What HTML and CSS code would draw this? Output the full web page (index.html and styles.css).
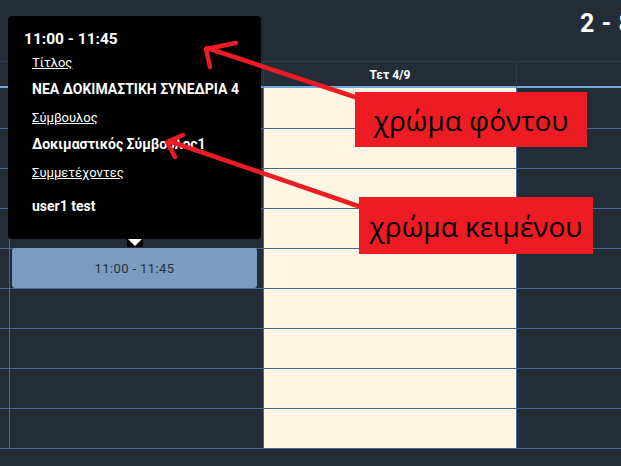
FILE: index.html
```html
<!DOCTYPE html>
<html lang="el">
<head>
<meta charset="utf-8">
<title>Calendar</title>
<link rel="stylesheet" href="styles.css">
</head>
<body>
<div class="page">
  <header class="topbar">
    <h1 class="range">2 - 8 Σεπτεμβρίου 2024</h1>
  </header>
  <div class="cal">
    <div class="hcell hgutter"></div>
    <div class="hcell hday"></div>
    <div class="hcell hday">Τετ 4/9</div>
    <div class="hcell hday hnext">Πεμ 5/9</div>

    <div class="col gutter">
      <div class="cell"></div><div class="cell"></div><div class="cell"></div><div class="cell"></div><div class="cell"></div><div class="cell"></div><div class="cell"></div><div class="cell"></div><div class="cell"></div>
    </div>
    <div class="col day">
      <div class="cell"></div><div class="cell"></div><div class="cell"></div><div class="cell"></div><div class="cell"></div><div class="cell"></div><div class="cell"></div><div class="cell"></div><div class="cell"></div>
      <div class="event" style="top:160px;height:40px">11:00 - 11:45</div>
    </div>
    <div class="col day today">
      <div class="cell"></div><div class="cell"></div><div class="cell"></div><div class="cell"></div><div class="cell"></div><div class="cell"></div><div class="cell"></div><div class="cell"></div><div class="cell"></div>
    </div>
    <div class="col day">
      <div class="cell"></div><div class="cell"></div><div class="cell"></div><div class="cell"></div><div class="cell"></div><div class="cell"></div><div class="cell"></div><div class="cell"></div><div class="cell"></div>
    </div>
  </div>

  <div class="tooltip">
    <div class="tt-time">11:00 - 11:45</div>
    <div class="tt-label">Τίτλος</div>
    <div class="tt-value">ΝΕΑ ΔΟΚΙΜΑΣΤΙΚΗ ΣΥΝΕΔΡΙΑ 4</div>
    <div class="tt-label">Σύμβουλος</div>
    <div class="tt-value">Δοκιμαστικός Σύμβουλος1</div>
    <div class="tt-label">Συμμετέχοντες</div>
    <div class="tt-value tt-last">user1 test</div>
  </div>
  <div class="tt-arrow"></div>

  <svg class="arrows" width="621" height="466" viewBox="0 0 621 466">
    <g stroke="#ed1c24" stroke-width="4.5" stroke-linecap="round" stroke-linejoin="round" fill="none">
      <path d="M358 98 L207 48"/>
      <path d="M236 43 L206 49 L210 67"/>
      <path d="M361 207 L169 141"/>
      <path d="M183 135 L167 142 L175 157"/>
    </g>
  </svg>

  <div class="note note-bg">χρώμα φόντου</div>
  <div class="note note-fg">χρώμα κειμένου</div>
</div>
</body>
</html>
```

FILE: styles.css
```css
* { box-sizing: border-box; }
html, body {
  margin: 0;
  padding: 0;
  width: 621px;
  height: 466px;
  overflow: hidden;
  background: #222d38;
}
.page {
  position: relative;
  width: 621px;
  height: 466px;
  overflow: hidden;
  font-family: Roboto, "DejaVu Sans", sans-serif;
  color: #fff;
}
.topbar {
  height: 61px;
  padding-left: 580px;
  white-space: nowrap;
  overflow: hidden;
}
.range {
  margin: 0;
  padding-top: 10px;
  font-size: 25px;
  line-height: 28px;
  font-weight: 700;
  letter-spacing: 0.5px;
}
.cal {
  display: grid;
  grid-template-columns: 9px 254px 253px 254px;
  grid-template-rows: 27px auto;
  width: 770px;
}
.hcell {
  border-top: 1px solid #303c49;
  border-bottom: 2px solid #6fa8e0;
  height: 27px;
  font-size: 12px;
  font-weight: 700;
  text-align: center;
  line-height: 24px;
  padding-top: 1px;
  white-space: nowrap;
}
.hday { border-left: 1px solid #303c49; }
.col {
  position: relative;
  padding-top: 1px;
}
.day { border-left: 1px solid #4a679a; }
.today { background: #fdf6e3; }
.cell {
  height: 40px;
  border-bottom: 1px solid #4a679a;
}
.event {
  position: absolute;
  left: 2px;
  right: 6px;
  background: #7a9cc0;
  border-radius: 3px;
  color: #26313c;
  font-size: 13px;
  display: flex;
  align-items: center;
  justify-content: center;
  letter-spacing: 0.4px;
}
.tooltip {
  position: absolute;
  left: 8px;
  top: 16px;
  width: 253px;
  height: 223px;
  background: #000;
  border-radius: 4px;
  padding: 13px 16px 0 16px;
}
.tt-time {
  font-size: 15.5px;
  font-weight: 700;
  line-height: 20px;
  margin-bottom: 6px;
}
.tt-label {
  margin-left: 8px;
  font-size: 13px;
  line-height: 16px;
  text-decoration: underline;
}
.tt-value {
  margin-left: 8px;
  font-size: 14px;
  font-weight: 700;
  line-height: 16px;
  margin-top: 10px;
  margin-bottom: 13px;
}
.tt-last { margin-top: 17px; }
.tt-arrow {
  position: absolute;
  left: 127px;
  top: 239px;
  width: 16px;
  height: 8px;
  background: #000;
}
.tt-arrow::after {
  content: "";
  position: absolute;
  left: 1px;
  top: 0;
  border-left: 7px solid transparent;
  border-right: 7px solid transparent;
  border-top: 7px solid #fff;
}
.arrows {
  position: absolute;
  left: 0;
  top: 0;
}
.note {
  position: absolute;
  background: #ed1c24;
  color: #000;
  font-family: "Open Sans", "Noto Sans", sans-serif;
  font-size: 28px;
  line-height: 32px;
  white-space: nowrap;
  display: flex;
  align-items: center;
  justify-content: center;
}
.note-bg {
  left: 355px;
  top: 92px;
  width: 232px;
  height: 55px;
}
.note-fg {
  left: 359px;
  top: 197px;
  width: 234px;
  height: 57px;
}
```
